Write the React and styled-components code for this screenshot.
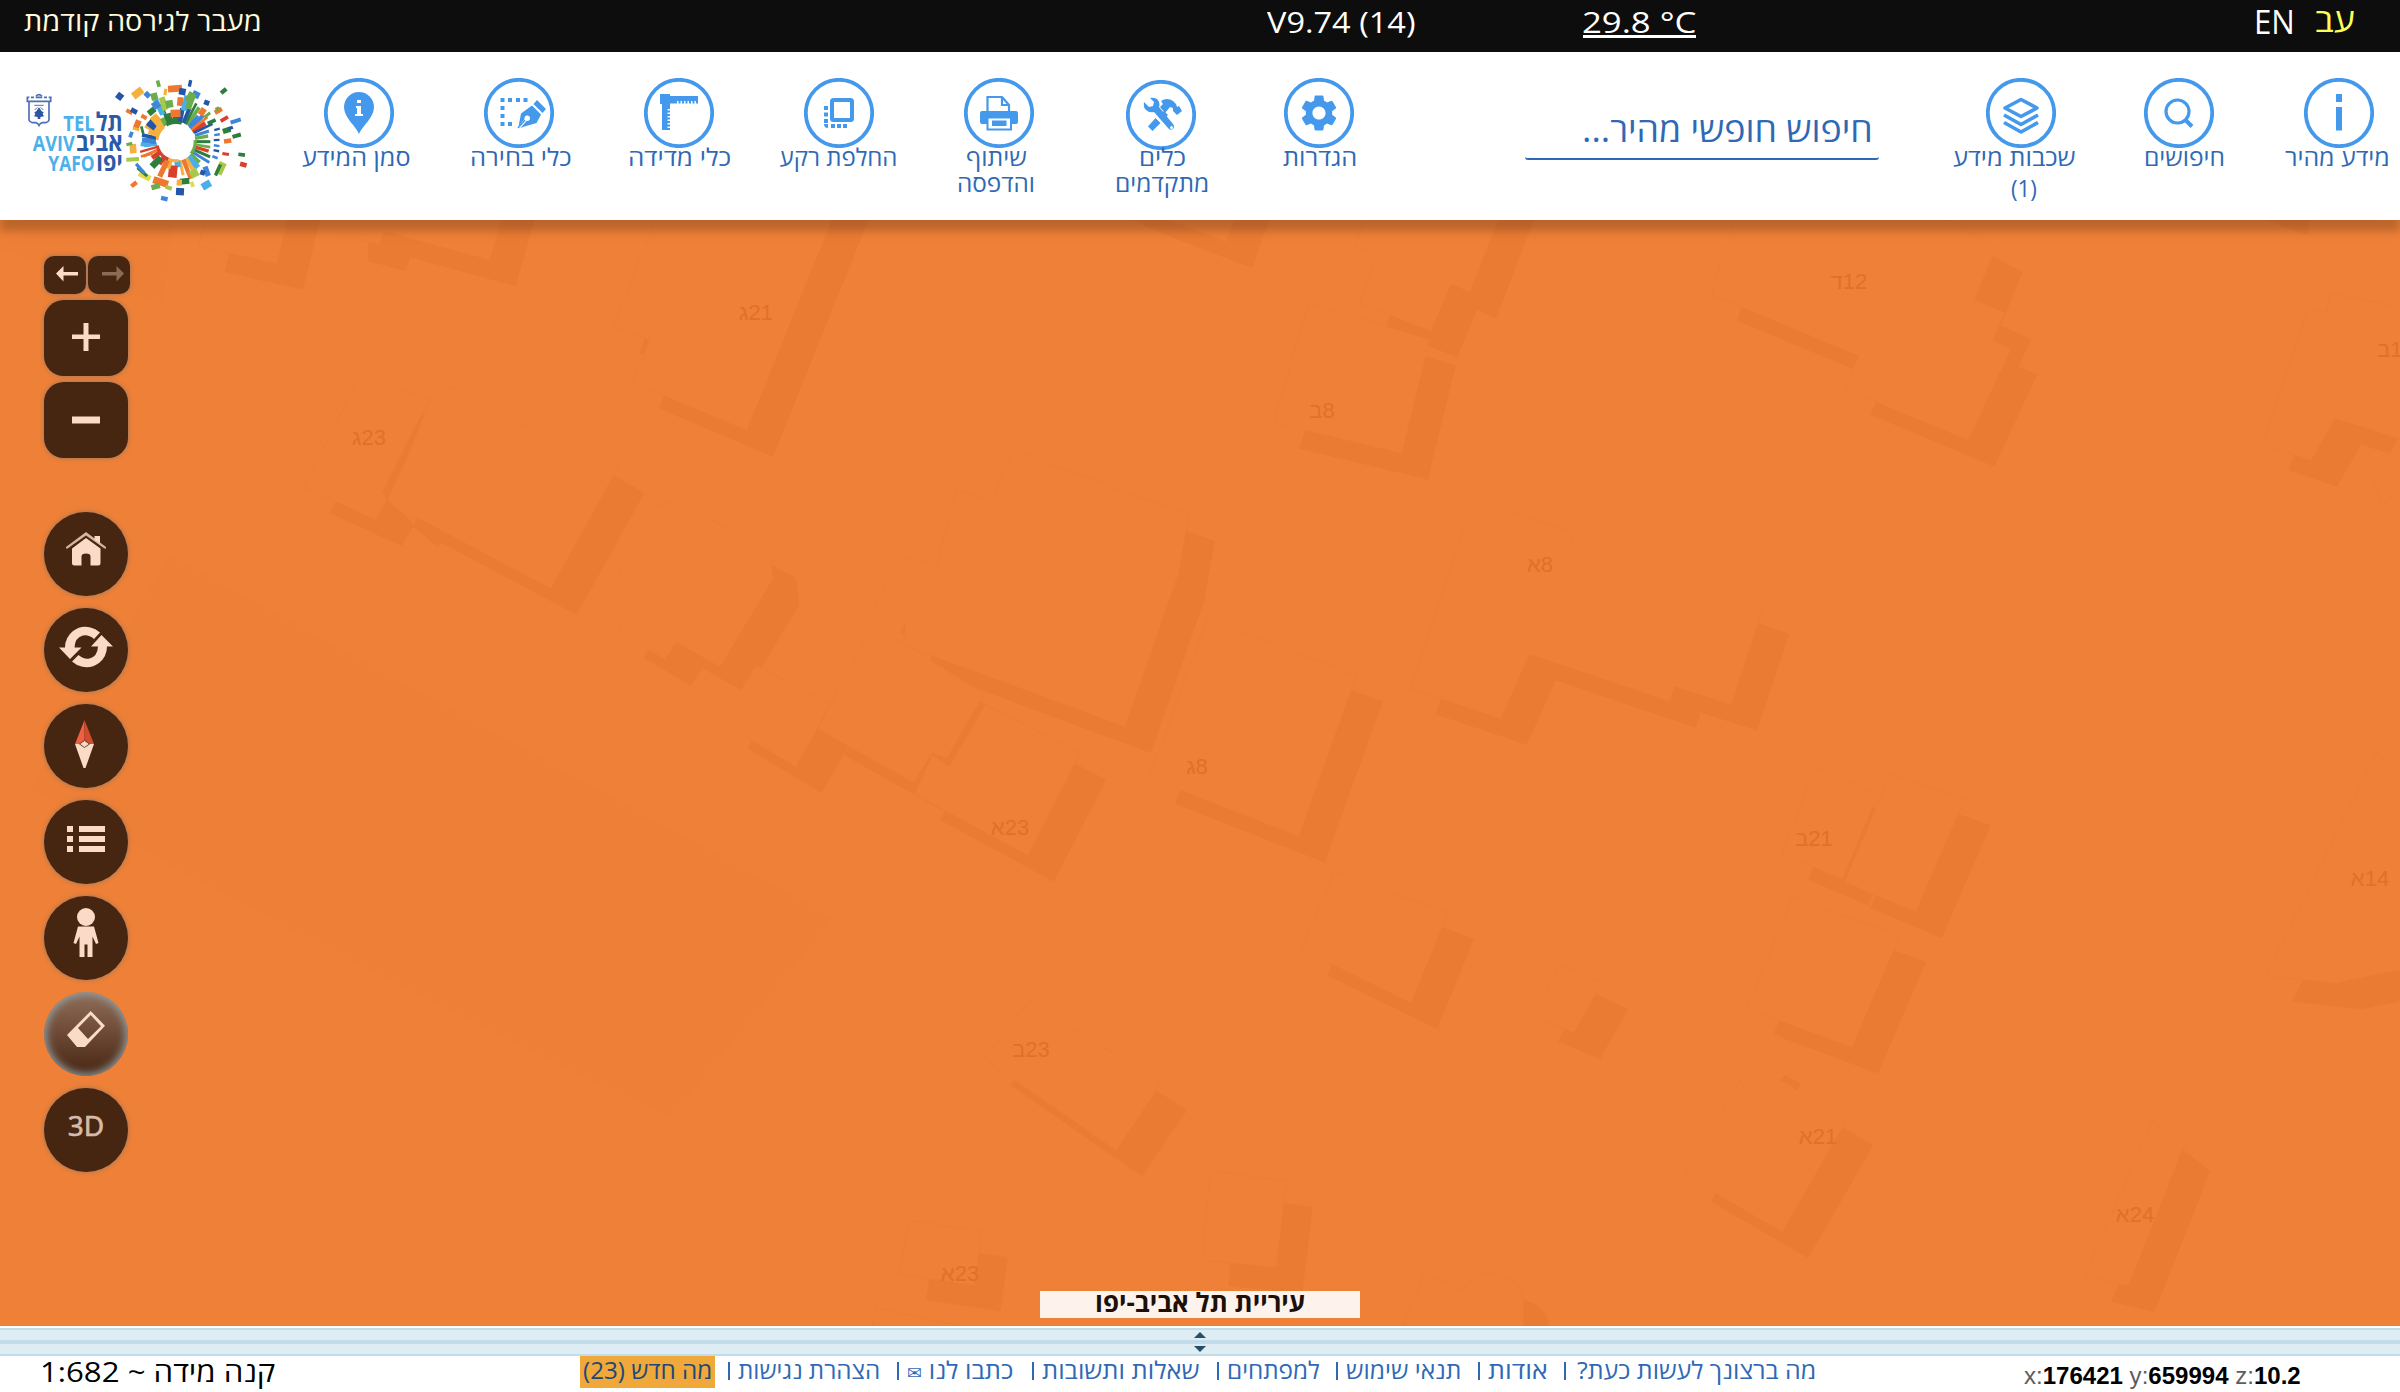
import React, { useLayoutEffect, useRef } from "react";
import styled, { createGlobalStyle, css } from "styled-components";
import { MdSettings } from "react-icons/md";

const BLUE = "#2f69b5";
const SKY = "#4499ec";
const BROWN = "#462511";
const CREAM = "#f9dbc8";
const MAP = "#ee8037";
const SHADE = "#ea7b33";
const HEB = `"Open Sans", "Liberation Sans", "DejaVu Sans", sans-serif`;

const Global = createGlobalStyle`
  *, *::before, *::after { box-sizing: border-box; }
  body { margin: 0; overflow: hidden; font-family: ${HEB}; background: #fff; }
  svg { display: block; }
`;

/* ---------- text that is condensed or widened to a given width ---------- */
const FitBox = styled.span`
  display: inline-flex;
  direction: ltr;
  flex: none;
  width: ${(p) => p.$w}px;
  height: ${(p) => p.$lh || 26}px;
  line-height: ${(p) => p.$lh || 26}px;
  margin-left: ${(p) => p.$shift || 0}px;
  font-size: ${(p) => p.$size || 24}px;
  font-weight: ${(p) => p.$weight || 400};
  color: ${(p) => p.$color || "inherit"};
`;
const FitText = styled.span`
  flex: none;
  white-space: pre;
  transform-origin: 0 50%;
  direction: ${(p) => (p.$ltr ? "ltr" : "rtl")};
`;
function Fit({ w, lh, size, weight, color, shift, ltr, children }) {
  const ref = useRef(null);
  useLayoutEffect(() => {
    /* one extra pixel on each side makes up for the glyphs' side bearings */
    const el = ref.current;
    el.style.transform = `translateX(-1px) scaleX(${(w + 2) / el.offsetWidth})`;
  });
  return (
    <FitBox $w={w} $lh={lh} $size={size} $weight={weight} $color={color} $shift={shift}>
      <FitText ref={ref} $ltr={ltr}>{children}</FitText>
    </FitBox>
  );
}

/* ---------- page ---------- */
const Page = styled.div`
  width: 2400px;
  height: 1392px;
  display: flex;
  flex-direction: column;
  overflow: hidden;
`;
const TopBar = styled.div`
  height: 52px;
  flex: none;
  display: flex;
  align-items: flex-start;
  padding: 3px 45px 0 25px;
  background: #0d0d0d;
  color: #fff;
`;
const TopCell = styled.div`
  display: flex;
  margin-left: ${(p) => p.$gap || 0}px;
`;
const Temperature = styled(TopCell)`
  height: 35px;
  border-bottom: 3px solid #fff;
`;

const Header = styled.header`
  position: relative;
  z-index: 2;
  height: 168px;
  flex: none;
  display: flex;
  align-items: flex-start;
  background: #fff;
  color: ${BLUE};
  box-shadow: 0 11px 8px rgba(0, 0, 0, 0.19), 0 12px 18px rgba(0, 0, 0, 0.03);
`;
const LogoBox = styled.div`
  width: 279px;
  flex: none;
  padding-top: 8px;
`;
const Tool = styled.div`
  flex: none;
  width: ${(p) => p.$w || 160}px;
  padding-top: ${(p) => 26 + (p.$drop || 0)}px;
  display: flex;
  flex-direction: column;
  align-items: center;
`;
const ToolLabel = styled.div`
  display: flex;
  flex-direction: column;
  align-items: center;
  margin-top: ${(p) => -4 - (p.$drop || 0)}px;
`;
const Search = styled.div`
  width: 354px;
  height: 108px;
  flex: none;
  margin: 0 83px 0 130px;
  padding: 57px 7px 0 0;
  display: flex;
  justify-content: flex-end;
  align-items: flex-start;
  border-bottom: 2px solid ${BLUE};
  border-radius: 3px;
`;

/* ---------- map ---------- */
const MapArea = styled.main`
  position: relative;
  height: 1106px;
  flex: none;
  overflow: hidden;
  background: ${MAP};
`;
const Terrain = styled.svg`
  position: absolute;
  inset: 0;
`;
const Controls = styled.div`
  position: absolute;
  left: 44px;
  top: 36px;
  display: flex;
  flex-direction: column;
  gap: ${(p) => p.$gap || 6}px;
`;
const RoundControls = styled(Controls)`
  top: 292px;
  gap: 12px;
`;
const Pair = styled.div`
  display: flex;
  gap: 2px;
`;
const Button = styled.button`
  width: ${(p) => p.$w}px;
  height: ${(p) => p.$h}px;
  border: 0;
  padding: 0;
  flex: none;
  display: flex;
  border-radius: ${(p) => p.$r};
  background: ${BROWN};
  box-shadow: 0 0 4px rgba(90, 110, 130, 0.65);
  ${(p) =>
    p.$active &&
    css`
      background: linear-gradient(#8f6e59, #6d4935 50%, ${BROWN});
      box-shadow: inset 0 0 9px 2px #93a3aa;
    `}
`;
const ThreeD = styled.span`
  width: 84px;
  padding-top: 17px;
  font: 400 28px/40px "Noto Sans", "Open Sans", sans-serif;
  -webkit-text-stroke: 0.6px #d8bba8;
  text-align: center;
  color: #d8bba8;
`;
const Caption = styled.div`
  position: absolute;
  left: 1040px;
  bottom: 8px;
  width: 320px;
  height: 27px;
  display: flex;
  justify-content: center;
  background: #fef3ec;
`;

/* ---------- bottom ---------- */
const Drawer = styled.div`
  flex: none;
  height: 30px;
  padding-top: 2px;
  background: #fff;
`;
const DrawerBar = styled.div`
  height: 14px;
  display: flex;
  justify-content: center;
  align-items: center;
  background: #deecf3;
  border: 2px solid #c2dcea;
  border-width: 2px 0;
`;
const Footer = styled.footer`
  height: 36px;
  flex: none;
  display: flex;
  align-items: flex-start;
  padding-left: 41px;
  background: #fff;
  color: ${BLUE};
`;
const WhatsNew = styled.div`
  width: 135px;
  height: 32px;
  flex: none;
  margin: 0 13px 0 306px;
  padding-left: 4px;
  background: #f0a83a;
  color: #1d4877;
`;
const LinkItem = styled.div`
  flex: none;
  width: ${(p) => p.$w}px;
  display: flex;
  align-items: flex-start;
  &::before {
    content: "";
    flex: none;
    width: 2px;
    height: 18px;
    margin: 6px ${(p) => p.$pad || 9}px 0 0;
    background: ${BLUE};
  }
`;
const Envelope = styled.span`
  font: 17px "DejaVu Sans", sans-serif;
`;
const Coords = styled.div`
  margin-left: 210px;
  padding-top: 8px;
  font-family: "Liberation Sans", sans-serif;
  color: #5d5d5d;
  b { color: #000; }
`;

/* ---------- footprints, each drawn with a shadow cast 26px right and down ---------- */
const sheets = [
  { at: [150, 200], k: [1.742, 2.24], lots: [
    "114,-60 85,103 221,143 260,-60",
    "337,-60 334,78 400,101 408,70 592,135 635,-60",
    "912,-60 807,285 870,314 841,409 1040,516 1221,-60",
    "366,391 487,446 437,572 405,655 414,672 393,717 268,643",
    "492,438 527,421 657,507 665,486 816,598 698,871 463,710 455,718 413,673 447,578",
    "887,683 918,673 1080,789 1086,848 993,1046 917,990 897,1029 815,967 832,926 792,895",
    "1056,1042 1181,1129 1163,1184 1125,1270 995,1170",
  ] },
  { at: [0, 0], k: [1, 1], lots: [
    "1012.8,450 991.6,502 957,490 936.5,565 914,557 900,560 874,607 906,624 903,645 1125,727 1178,575 1189,515",
    "1561,964 1602,983 1574,1033 1532,1015.6",
    "876,1308 960,1326 960,1340 870,1340",
    "1060,175 1148,212 1226,242 1260,150",
    "2200,180 2282,209 2290,150",
    "1424,1273 1462,1290 1471,1280 1482,1274 1496,1273 1511,1279 1521,1290 1524,1304 1523,1340 1398,1340",
  ] },
  { at: [700, 600], k: [1.742, 2.178], lots: [
    "299,58 362,100 495,205 430,345 405,332 372,398 205,281",
    "497,227 662,335 571,557 374,423 405,337 434,363",
    "884,41 1144,165 1043,515 782,387",
    "1105,592 1303,681 1239,878 1048,761",
    "573,871 803,1054 725,1199 496,1001",
    "889,1243 1022,1265 1004,1454 875,1438",
    "363,1351 491,1375 478,1493 348,1468",
  ] },
  { at: [1200, 200], k: [1.3067, 2.703], lots: [
    "228,-30 203,124 232,150 208,278 302,355 328,227 353,250 405,-30",
    "142,277 300,378 264,685 96,602",
    "713,-30 668,256 861,422 842,510 1004,650 1060,402 1036,380 1052,305 1012,270 1041,125 900,-30",
    "1476,250 1473,302 1448,295 1389,660 1452,705 1483,591 1620,680 1620,315",
    "1565,645 1534,760 1545,825 1620,690 1620,640",
    "360,805 486,898 484,928 736,1102 694,1364 620,1315 614,1356 431,1228 393,1402 274,1320",
  ] },
  { at: [1600, 750], k: [1.96, 2.8], lots: [
    "422,48 545,125 475,363 357,290",
    "569,66 715,138 619,454 479,370",
    "377,412 588,520 494,833 305,733 290,720",
    "311,837 343,863 327,902 485,1034 357,1350 166,1191",
    "1083,1036 1145,1106 1036,1501 951,1471",
    "1523,5 1568,62 1620,130 1620,600 1443,653 1305,632",
  ] },
];
const footprints = sheets.flatMap(({ at, k, lots }) =>
  lots.map((lot) =>
    lot.split(" ").map((pt) => {
      const [x, y] = pt.split(",").map(Number);
      return `${(at[0] + x / k[0]).toFixed(1)},${(at[1] + y / k[1]).toFixed(1)}`;
    }).join(" ")
  )
);
const houseNumbers = [
  ["21ג", 756, 320], ["23ג", 369, 445], ["23א", 1010, 835], ["12ד", 1849, 289],
  ["8ב", 1322, 418], ["8א", 1540, 572], ["14ב", 2396, 357], ["8ג", 1197, 774],
  ["23ב", 1031, 1057], ["23א", 960, 1281], ["21ב", 1814, 846], ["14א", 2370, 886],
  ["21א", 1818, 1144], ["24א", 2135, 1222],
];
const HouseNumber = styled.text`
  font: 22px "Liberation Sans", sans-serif;
  fill: #e27029;
  direction: rtl;
  text-anchor: middle;
`;

function CityMap() {
  return (
    <Terrain width="2400" height="1106" viewBox="0 220 2400 1106">
      <g fill="#ed7f36">
        <polygon points="170,556 833,918 670,1118 293,930 30,789" />
        <polygon points="0,220 172,220 163,305 0,248" />
      </g>
      <g fill={SHADE} transform="translate(26 26)">
        {footprints.map((p, i) => <polygon key={i} points={p} />)}
      </g>
      <g fill={MAP} stroke="#ec7d36" strokeWidth="0.7">
        {footprints.map((p, i) => <polygon key={i} points={p} />)}
      </g>
      {houseNumbers.map(([t, x, y], i) => <HouseNumber key={i} x={x} y={y}>{t}</HouseNumber>)}
    </Terrain>
  );
}

/* ---------- logo ---------- */
const C = { b: "#2456a8", s: "#3f86d8", c: "#4aaeea", g: "#2f7d3c", l: "#6aad4a", y: "#a8c84a", o: "#ee7830", a: "#f5b040", r: "#d9402c", e: "#e0dc50" };
/* angle, inner radius, length, width, colour */
const rays = [
  [0, 57, 24, 18, "g"], [22, 60, 50, 12, "b"], [34, 60, 64, 11, "l"], [46, 58, 56, 12, "s"], [58, 58, 46, 14, "r"], [64, 60, 62, 8, "b"],
  [72, 60, 44, 9, "s"], [80, 58, 40, 10, "l"], [90, 57, 46, 9, "g"], [99, 60, 44, 8, "l"], [106, 58, 44, 10, "r"], [114, 60, 52, 9, "g"],
  [122, 58, 60, 9, "s"], [132, 58, 36, 14, "l"], [140, 58, 44, 18, "c"], [149, 58, 56, 12, "a"], [158, 58, 62, 13, "o"], [168, 57, 46, 9, "a"],
  [176, 57, 20, 18, "c"], [186, 72, 36, 26, "r"], [197, 58, 26, 15, "a"], [205, 60, 56, 16, "o"], [217, 58, 26, 15, "r"], [224, 66, 38, 20, "g"],
  [236, 57, 30, 14, "r"], [246, 58, 48, 9, "o"], [254, 58, 54, 7, "r"], [263, 58, 38, 10, "c"], [272, 60, 42, 18, "s"], [281, 58, 46, 11, "b"],
  [290, 58, 30, 14, "a"], [300, 58, 46, 20, "a"], [307, 74, 28, 28, "b"], [318, 56, 48, 24, "a"], [330, 58, 24, 15, "l"], [338, 58, 64, 10, "g"],
  [346, 58, 30, 15, "g"], [11, 58, 44, 14, "b"], [359, 74, 22, 30, "o"], [28, 60, 70, 8, "g"], [40, 60, 42, 9, "s"], [52, 60, 60, 8, "o"],
  [334, 90, 50, 16, "c"], [342, 100, 40, 18, "y"], [350, 104, 22, 22, "l"], [6, 108, 26, 18, "o"], [14, 96, 46, 18, "c"], [20, 104, 50, 18, "l"],
];
/* x, y, width, height, rotation, colour */
const bits = [
  [525, 86, 42, 20, -4, "o"], [547, 95, 20, 20, 10, "b"], [570, 70, 10, 20, 12, "b"], [475, 71, 11, 20, -15, "l"], [413, 99, 34, 22, -38, "a"],
  [359, 109, 20, 20, 38, "b"], [442, 104, 18, 16, 45, "s"], [463, 110, 20, 22, -15, "l"], [496, 96, 9, 20, 8, "a"], [588, 104, 22, 20, 25, "s"],
  [572, 112, 24, 30, 30, "l"], [620, 128, 16, 15, 20, "b"], [671, 93, 20, 13, -40, "g"], [655, 152, 24, 14, -30, "o"], [652, 146, 12, 10, -30, "l"],
  [673, 177, 25, 11, -30, "r"], [707, 183, 32, 12, -18, "s"], [680, 211, 24, 16, -18, "g"], [692, 204, 14, 10, -20, "b"], [710, 227, 26, 12, -16, "g"],
  [683, 243, 22, 13, -8, "o"], [725, 284, 20, 11, 8, "g"], [730, 314, 20, 14, 15, "r"], [677, 282, 20, 9, 10, "r"], [651, 208, 17, 7, -15, "b"],
  [651, 224, 17, 7, -8, "s"], [650, 240, 17, 7, -3, "b"], [650, 257, 17, 7, 8, "s"], [649, 272, 17, 7, 12, "b"], [645, 292, 17, 8, 20, "s"],
  [662, 325, 22, 38, 25, "y"], [654, 330, 10, 36, 25, "g"], [620, 334, 16, 30, -20, "s"], [608, 338, 15, 15, 20, "b"], [619, 375, 28, 22, -30, "c"],
  [582, 340, 25, 24, -28, "y"], [540, 395, 24, 22, 3, "b"], [554, 364, 28, 18, -6, "g"], [538, 368, 16, 18, 3, "a"], [577, 373, 11, 16, -15, "e"],
  [493, 416, 20, 13, 12, "s"], [402, 373, 20, 13, -38, "o"], [482, 366, 46, 22, 18, "o"], [506, 383, 20, 12, 20, "y"], [467, 380, 26, 16, -15, "l"],
  [434, 348, 38, 18, 28, "e"], [427, 336, 38, 9, 40, "g"], [421, 326, 38, 10, 48, "s"], [398, 298, 38, 12, -3, "y"], [399, 266, 20, 28, -4, "a"],
  [388, 252, 18, 9, -15, "l"], [393, 224, 11, 18, 20, "s"], [412, 193, 18, 26, 22, "o"], [408, 207, 20, 8, 15, "a"], [388, 155, 20, 12, 25, "o"],
  [402, 153, 20, 14, 28, "b"], [432, 171, 18, 12, 30, "o"], [455, 154, 24, 18, -40, "g"], [427, 211, 8, 24, -15, "g"], [468, 135, 22, 22, -35, "s"],
  [607, 155, 18, 22, 35, "o"], [622, 165, 22, 9, -38, "l"], [635, 185, 26, 11, -25, "g"], [440, 285, 36, 8, -15, "o"], [436, 254, 28, 12, 5, "c"],
];
const LogoWord = styled.text`
  font: 700 ${(p) => p.$size}px "Open Sans", "Liberation Sans", sans-serif;
`;
const logoWords = [
  ["TEL", 190, 214, 94, 66, "#4cb0ea"], ["AVIV", 98, 273, 126, 66, "#4cb0ea"], ["YAFO", 145, 332, 139, 66, "#4cb0ea"],
  ["תל", 287, 214, 81, 76, "#2b5aa9"], ["אביב", 228, 273, 140, 76, "#2b5aa9"], ["יפו", 289, 332, 79, 76, "#2b5aa9"],
];

function Logo() {
  return (
    <svg width="270" height="160" viewBox="0 0 810 480">
      <g fill="none" stroke="#4d70b4" strokeWidth="5">
        <path d="M82 112v12h70v-12M80 112h8M93 112h9M107 112h20M132 112h9M146 112h9M108 108q9-8 18 0" />
        <path d="M87 126v54q2 7 10 8h10q7 2 10 8q3-6 10-8h10q8-1 10-8v-54" />
        <path d="M103 136h28M104 150l8-8M130 150l-8-8" strokeWidth="3" />
      </g>
      <path d="M117 142l8 12 6 3-3 5 4 7-11 2v6h-8v-6l-11-2 4-7-3-5 6-3z" fill="#2d55a3" />
      {logoWords.map(([word, x, y, len, size, fill]) => (
        <LogoWord key={word} $size={size} x={x} y={y} textLength={len} lengthAdjust="spacingAndGlyphs" fill={fill}>{word}</LogoWord>
      ))}
      <g transform="translate(528 245)">
        {rays.map(([a, r, len, w, c], i) => (
          <rect key={i} x={-w / 2} y={-r - len} width={w} height={len} fill={C[c]} transform={`rotate(${a})`} />
        ))}
      </g>
      {bits.map(([x, y, w, h, a, c], i) => (
        <rect key={i} x={-w / 2} y={-h / 2} width={w} height={h} fill={C[c]} transform={`translate(${x} ${y}) rotate(${a})`} />
      ))}
      <g fill="none" strokeWidth="12">
        <path d="M473 256a56 56 0 0 0 33 41" stroke={C.r} />
        <path d="M506 297a56 56 0 0 0 30 3" stroke={C.a} />
        <path d="M584 240a56 56 0 0 1-12 40" stroke={C.l} />
        <path d="M473 240a56 56 0 0 1 20-38" stroke={C.a} />
        <path d="M500 196a56 56 0 0 1 44-4" stroke={C.g} />
      </g>
      <circle cx="528" cy="245" r="53" fill="#fff" />
    </svg>
  );
}

/* ---------- header icons ---------- */
function Ring({ children }) {
  return (
    <svg width="70" height="70" viewBox="0 0 70 70" fill={SKY}>
      <circle cx="35" cy="35" r="33.2" fill="none" stroke={SKY} strokeWidth="3.8" />
      {children}
    </svg>
  );
}
const dots = (list, s = 4) => list.map(([x, y]) => <rect key={`${x}-${y}`} x={x} y={y} width={s} height={s} />);
const icons = {
  pin: (
    <>
      <path d="M35 56C32 48 20 40 20 29a15 15 0 0 1 30 0C50 40 38 48 35 56z" />
      <path d="M33 22h4v3h-4zM32 28h5v8h2v2h-8v-2h2v-6h-1z" fill="#fff" />
    </>
  ),
  select: (
    <>
      {dots([[16.5, 20], [24, 20], [32, 20], [39.5, 20], [16.5, 28], [16.5, 36], [16.5, 44], [24, 44]])}
      <path d="M53 22l9 9-3.500 4-9-9zM48 27.500l9 9-4.500 8.500-12 3.500-4 1.500 6-7a2.800 2.800 0 1 0-2-2l-6 7.500 2.500-13z" />
      <path d="M34 50l7-8" stroke={SKY} strokeWidth="1.500" />
    </>
  ),
  ruler: (
    <>
      <path d="M16 16h10v2h28v7.500h-2v-2.500h-1.500v2.500h-2v-2.500H47v2.500h-2v-2.500h-1.500v2.500h-2v-2.500H40v2.500h-2v-2.500h-1.500v2.500h-2v-2.500H33v2.500h-7V31h-2.500v1.500H26v2h-2.500V36H26v2h-2.500v1.500H26v2h-2.500V43H26v2h-2.500v1.500H26v2h-2.500V50H26v2h-8V26h-2z" />
    </>
  ),
  swap: (
    <>
      <rect x="28" y="22" width="20" height="20" rx="1.500" fill="none" stroke={SKY} strokeWidth="4" />
      {dots([[20, 28], [20, 34.500], [20, 41], [27, 46], [33, 46], [39, 46]])}
      <path d="M20 46h4v4q-4 0-4-4z" />
    </>
  ),
  print: (
    <>
      <path d="M23.500 34V19h14.500l7 8v7" fill="none" stroke={SKY} strokeWidth="2.200" />
      <path d="M38 19v8h7" fill="none" stroke={SKY} strokeWidth="2.200" />
      <rect x="16" y="33" width="38" height="13" rx="2" />
      <rect x="23.500" y="39.500" width="23.500" height="12" fill="#fff" stroke={SKY} strokeWidth="2" />
      <rect x="28" y="42.500" width="14.500" height="5.500" />
    </>
  ),
  tools: (
    <>
      <path d="M18 22l5 5 4-1 1-4-4-4q7-1 9 4 1 3 0 5l14 17q2 3 0 5-3 2-5-1L28 32q-5 1-8-2-3-3-2-8z" />
      <path d="M35 21q6-4 12 0l3 3 1 3 2-1 3 5-5 4-4-4 0-3-3-1-5 6-5-6 3-3z" />
      <path d="M29.500 38l5 5-8 8-4.500-4.500z" />
      <path d="M38 31l4 4-3 3-4-4z" />
      <circle cx="45.500" cy="47.500" r="1.500" fill="#fff" />
    </>
  ),
  settings: <MdSettings x="13" y="13" size="44" color={SKY} />,
  layers: (
    <g fill="none" stroke={SKY} strokeWidth="3.600" strokeLinejoin="round">
      <path d="M35 21.500L51 30 35 38.500 19 30z" />
      <path d="M18 37l17 9.500L52 37M18 44.500L35 54l17-9.500" />
    </g>
  ),
  find: (
    <g fill="none" stroke={SKY} strokeWidth="3.200">
      <circle cx="33.500" cy="33.500" r="11.500" />
      <path d="M41 41.500l7 7" strokeWidth="4" />
    </g>
  ),
  info: (
    <>
      <rect x="32" y="16" width="6" height="8" />
      <rect x="32" y="29" width="6" height="23.500" />
    </>
  ),
};

function ToolButton({ icon, w, drop, lines }) {
  return (
    <Tool $w={w} $drop={drop}>
      <Ring>{icons[icon]}</Ring>
      <ToolLabel $drop={drop}>
        {lines.map(([text, width, shift, lh]) => (
          <Fit key={text} w={width} shift={shift} lh={lh}>{text}</Fit>
        ))}
      </ToolLabel>
    </Tool>
  );
}
const leftTools = [
  { icon: "pin", lines: [["סמן המידע", 106, -7]] },
  { icon: "select", lines: [["כלי בחירה", 100, 3]] },
  { icon: "ruler", lines: [["כלי מדידה", 101, 1]] },
  { icon: "swap", lines: [["החלפת רקע", 116, -1]] },
  { icon: "print", lines: [["שיתוף", 59, -6], ["והדפסה", 76, -6]] },
  { icon: "tools", w: 164, drop: 2, lines: [["כלים", 45, 2], ["מתקדמים", 92, 2]] },
  { icon: "settings", w: 152, lines: [["הגדרות", 72, 2]] },
];
const rightTools = [
  { icon: "layers", w: 118, lines: [["שכבות מידע", 121, -14], ["(1)", 24, 6, 36]] },
  { icon: "find", w: 198, lines: [["חיפושים", 79, 10]] },
  { icon: "info", w: 122, lines: [["מידע מהיר", 103, -4]] },
];

/* ---------- map control glyphs ---------- */
const Glyph = ({ w = 84, h = 84, color = CREAM, children }) => (
  <svg width={w} height={h} viewBox={`0 0 ${w} ${h}`} fill={color}>{children}</svg>
);
const rounds = [
  ["home", <>
    <path d="M42 20l20 15v1.500h-1.500L42 23.500 23.500 36.500H22V35z" opacity=".8" />
    <path d="M50.500 24H56v7.500l-5.500-4z" />
    <path d="M42 26l14.500 10.500V51q0 2.500-2.500 2.500h-7.500v-9q0-3-4.500-3t-4.500 3v9H30.500q-2.500 0-2.500-2.500V36.500z" />
  </>],
  ["refresh", <>
    <path d="M15 39.500h6q0-10 8-16.500 8-6 17.500-3.500 5 1 9.500 5L50 31q-5-4.500-11-3.500-8 2-8.500 12h7L26 51z" />
    <path d="M69 38.500h-6q0 10-8 16.500-8 6-17.500 3.500-5-1-9.500-5l6.500-6.500q5 4.500 11 3.500 8-2 8.500-12h-7L57.500 27z" />
  </>],
  ["compass", <>
    <path d="M40.500 16L31 40h9.500z" fill="#ee6041" />
    <path d="M40.500 16L50 40h-9.500z" fill="#d14b2d" />
    <path d="M31 40h19l-8.500 24h-2z" />
    <path d="M35.500 40l5-3.500 5 3.500-5 3.500z" stroke="#5a3322" strokeWidth=".9" />
  </>],
  ["list", <path d="M23 26h6v6h-6zM35 26h26v6H35zM23 36h6v6h-6zM35 36h26v6H35zM23 46h6v6h-6zM35 46h26v6H35z" />],
  ["person", <>
    <circle cx="42" cy="21" r="9" />
    <path d="M34 30.500h16l4.500 16.500-2.500 1-3.500-7.500V61h-5V48.500h-3V61h-5V40.500L32 48l-2.500-1z" />
  </>],
  ["erase", <path fillRule="evenodd" d="M46.700 19L61 33.700 41 55h-8L23 43zM46.700 23L34 36l10 11 13-12.700z" />],
];
const ArrowLeft = <path d="M12 17.500L19.500 10v6H34v3.500H19.500v6z" />;
const ArrowRight = <path d="M36 17.500L28.500 10v6H14v3.500h14.500v6z" />;

const links = [
  { w: 169, text: "הצהרת נגישות", tw: 140 },
  { w: 135, text: "כתבו לנו ", tw: 104, mail: true },
  { w: 185, text: "שאלות ותשובות", tw: 156 },
  { w: 119, text: "למפתחים", tw: 91 },
  { w: 142, text: "תנאי שימוש", tw: 113 },
  { w: 86, text: "אודות", tw: 58 },
  { w: 251, pad: 12, text: "מה ברצונך לעשות כעת?", tw: 237 },
];

export default function App() {
  return (
    <Page>
      <Global />
      <TopBar>
        <Fit w={236} size={26} lh={37} color="#fffbdc">מעבר לגירסה קודמת</Fit>
        <TopCell $gap={1007}><Fit ltr w={146} size={29} lh={38} weight={500}>V9.74 (14)</Fit></TopCell>
        <Temperature $gap={169}><Fit ltr w={113} size={29} lh={38} weight={500}>29.8 °C</Fit></Temperature>
        <TopCell $gap={559}><Fit ltr w={39} size={32} lh={37}>EN</Fit></TopCell>
        <TopCell $gap={22}><Fit w={38} size={33} lh={34} color="#ffff55">עב</Fit></TopCell>
      </TopBar>
      <Header>
        <LogoBox><Logo /></LogoBox>
        {leftTools.map((t) => <ToolButton key={t.icon} {...t} />)}
        <Search>
          <Fit w={289} size={34} lh={40}>חיפוש חופשי מהיר...</Fit>
        </Search>
        {rightTools.map((t) => <ToolButton key={t.icon} {...t} />)}
      </Header>
      <MapArea>
        <CityMap />
        <Controls>
          <Pair>
            <Button $w={42} $h={38} $r="10px"><Glyph w={42} h={38}>{ArrowLeft}</Glyph></Button>
            <Button $w={42} $h={38} $r="10px"><Glyph w={42} h={38} color="#8d6a54">{ArrowRight}</Glyph></Button>
          </Pair>
          <Button $w={84} $h={76} $r="20px"><Glyph h={76}><path d="M28 34.500h11.500V23h5v11.500H56v4.500H44.500v12h-5V39H28z" /></Glyph></Button>
          <Button $w={84} $h={76} $r="20px"><Glyph h={76}><path d="M28 34.500h28v7H28z" /></Glyph></Button>
        </Controls>
        <RoundControls>
          {rounds.map(([name, art]) => (
            <Button key={name} $w={84} $h={84} $r="50%" $active={name === "erase"}><Glyph>{art}</Glyph></Button>
          ))}
          <Button $w={84} $h={84} $r="50%"><ThreeD>3D</ThreeD></Button>
        </RoundControls>
        <Caption><Fit w={208} size={26} lh={23} weight={700} color="#1c1009">עיריית תל אביב-יפו</Fit></Caption>
      </MapArea>
      <Drawer>
        <DrawerBar><svg width="14" height="6"><path d="M7 0l6 6H1z" fill="#264d69" /></svg></DrawerBar>
        <DrawerBar><svg width="14" height="6"><path d="M7 6L1 0h12z" fill="#264d69" /></svg></DrawerBar>
      </Drawer>
      <Footer>
        <Fit w={233} size={28} lh={30} color="#000">קנה מידה ~ 1:682</Fit>
        <WhatsNew><Fit w={127} size={24} lh={28}>מה חדש (23)</Fit></WhatsNew>
        {links.map(({ w, pad, text, tw, mail }) => (
          <LinkItem key={text} $w={w} $pad={pad}>
            <Fit w={tw} size={24} lh={28}>{text}{mail && <Envelope>✉</Envelope>}</Fit>
          </LinkItem>
        ))}
        <Coords><Fit ltr w={275} size={23} lh={24}>x:<b>176421</b> y:<b>659994</b> z:<b>10.2</b></Fit></Coords>
      </Footer>
    </Page>
  );
}
